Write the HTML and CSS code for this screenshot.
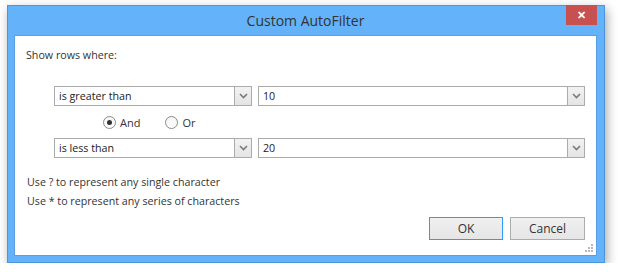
FILE: index.html
```html
<!DOCTYPE html>
<html lang="en">
<head>
    <meta charset="UTF-8">
    <link rel="stylesheet" href="styles.css">
    <title>Custom AutoFilter</title>
</head>
<body>

    <div class="window">
        <div class="title-bar">
            <span></span>
            <span class="title">Custom AutoFilter</span>
            <span class="close">&#x2715;</span>
        </div>

        <div class="panel">
            <div class="caption">Show rows where:</div>

            <div class="criteria">
                <div class="row">
                    <div class="combo op">
                        <span class="value">is greater than</span>
                        <span class="arrow"><svg width="9" height="6" viewBox="0 0 9 6"><path d="M1 1 L4.5 4.5 L8 1" fill="none" stroke="#7a7a7a" stroke-width="1.6"/></svg></span>
                    </div>
                    <div class="combo val">
                        <span class="value">10</span>
                        <span class="arrow"><svg width="9" height="6" viewBox="0 0 9 6"><path d="M1 1 L4.5 4.5 L8 1" fill="none" stroke="#7a7a7a" stroke-width="1.6"/></svg></span>
                    </div>
                </div>

                <div class="radios">
                    <label class="radio"><span class="dot checked"></span>And</label>
                    <label class="radio"><span class="dot"></span>Or</label>
                </div>

                <div class="row">
                    <div class="combo op">
                        <span class="value">is less than</span>
                        <span class="arrow"><svg width="9" height="6" viewBox="0 0 9 6"><path d="M1 1 L4.5 4.5 L8 1" fill="none" stroke="#7a7a7a" stroke-width="1.6"/></svg></span>
                    </div>
                    <div class="combo val">
                        <span class="value">20</span>
                        <span class="arrow"><svg width="9" height="6" viewBox="0 0 9 6"><path d="M1 1 L4.5 4.5 L8 1" fill="none" stroke="#7a7a7a" stroke-width="1.6"/></svg></span>
                    </div>
                </div>
            </div>

            <div class="hints">
                <div>Use ? to represent any single character</div>
                <div>Use * to represent any series of characters</div>
            </div>

            <div class="buttons">
                <button class="btn default">OK</button>
                <button class="btn">Cancel</button>
            </div>

            <svg class="grip" width="9" height="9" viewBox="0 0 9 9">
                <rect x="6" y="0" width="2" height="2" fill="#b8b8b8"/>
                <rect x="3" y="3" width="2" height="2" fill="#b8b8b8"/>
                <rect x="6" y="3" width="2" height="2" fill="#b8b8b8"/>
                <rect x="0" y="6" width="2" height="2" fill="#b8b8b8"/>
                <rect x="3" y="6" width="2" height="2" fill="#b8b8b8"/>
                <rect x="6" y="6" width="2" height="2" fill="#b8b8b8"/>
            </svg>
        </div>
    </div>

</body>
</html>
```

FILE: styles.css
```css
body {
    margin: 0;
    background-color: #fff;
    font-family: 'Open Sans', sans-serif;
    font-size: 10.7px;
    color: #333;
}

.window {
    box-sizing: border-box;
    width: 598px;
    height: 258px;
    margin: 5px 0 0 7px;
    background-color: #64b2f9;
    border: 1px solid #4c95dc;
    box-shadow: 2px 4px 10px rgba(0, 0, 0, 0.35);
    padding: 0 7px 6px 6px;
    display: flex;
    flex-direction: column;
}

.title-bar {
    height: 29px;
    display: grid;
    grid-template-columns: 1fr auto 1fr;
    align-items: start;
}

.title {
    font-size: 14px;
    color: #333;
    line-height: 29px;
}

.close {
    justify-self: end;
    width: 31px;
    height: 20px;
    margin-top: -1px;
    background-color: #c75050;
    color: #fff;
    font-size: 11px;
    font-weight: bold;
    text-align: center;
    line-height: 20px;
}

.panel {
    flex: 1;
    position: relative;
    background-color: #fff;
    border: 1px solid #5a9fe4;
    padding: 11px 11px 0 11px;
    display: flex;
    flex-direction: column;
}

.caption {
    line-height: 16px;
}

.criteria {
    margin-top: 23px;
    padding-left: 28px;
}

.row {
    display: flex;
    gap: 6px;
}

.combo {
    box-sizing: border-box;
    height: 20px;
    border: 1px solid #ababab;
    display: flex;
    align-items: stretch;
    background-color: #fff;
}

.combo.op {
    width: 198px;
}

.combo.val {
    flex: 1;
}

.value {
    flex: 1;
    padding-left: 4px;
    line-height: 18px;
    color: #222;
}

.arrow {
    width: 16px;
    border-left: 1px solid #ababab;
    background: linear-gradient(#f2f2f2, #e4e4e4);
    display: flex;
    align-items: center;
    justify-content: center;
}

.radios {
    height: 32px;
    display: flex;
    align-items: center;
    padding-left: 49px;
    gap: 25px;
}

.radio {
    display: flex;
    align-items: center;
    gap: 4px;
    font-size: 11px;
}

.dot {
    box-sizing: border-box;
    width: 13px;
    height: 13px;
    border: 1px solid #8a8a8a;
    border-radius: 50%;
    background: linear-gradient(#f4f4f4, #fff);
    display: flex;
    align-items: center;
    justify-content: center;
}

.dot.checked::after {
    content: "";
    width: 5px;
    height: 5px;
    border-radius: 50%;
    background-color: #333;
}

.hints {
    margin-top: 15px;
    line-height: 19px;
    padding-left: 1px;
}

.buttons {
    margin-top: 6px;
    display: flex;
    justify-content: flex-end;
    gap: 7px;
}

.btn {
    box-sizing: border-box;
    width: 75px;
    height: 23px;
    border: 1px solid #acacac;
    background: linear-gradient(#f0f0f0, #e5e5e5);
    font-family: 'Open Sans', sans-serif;
    font-size: 12px;
    color: #333;
    padding: 0;
}

.btn.default {
    border-color: #3399ff;
    width: 74px;
}

.grip {
    position: absolute;
    right: 2px;
    bottom: 2px;
}
```
